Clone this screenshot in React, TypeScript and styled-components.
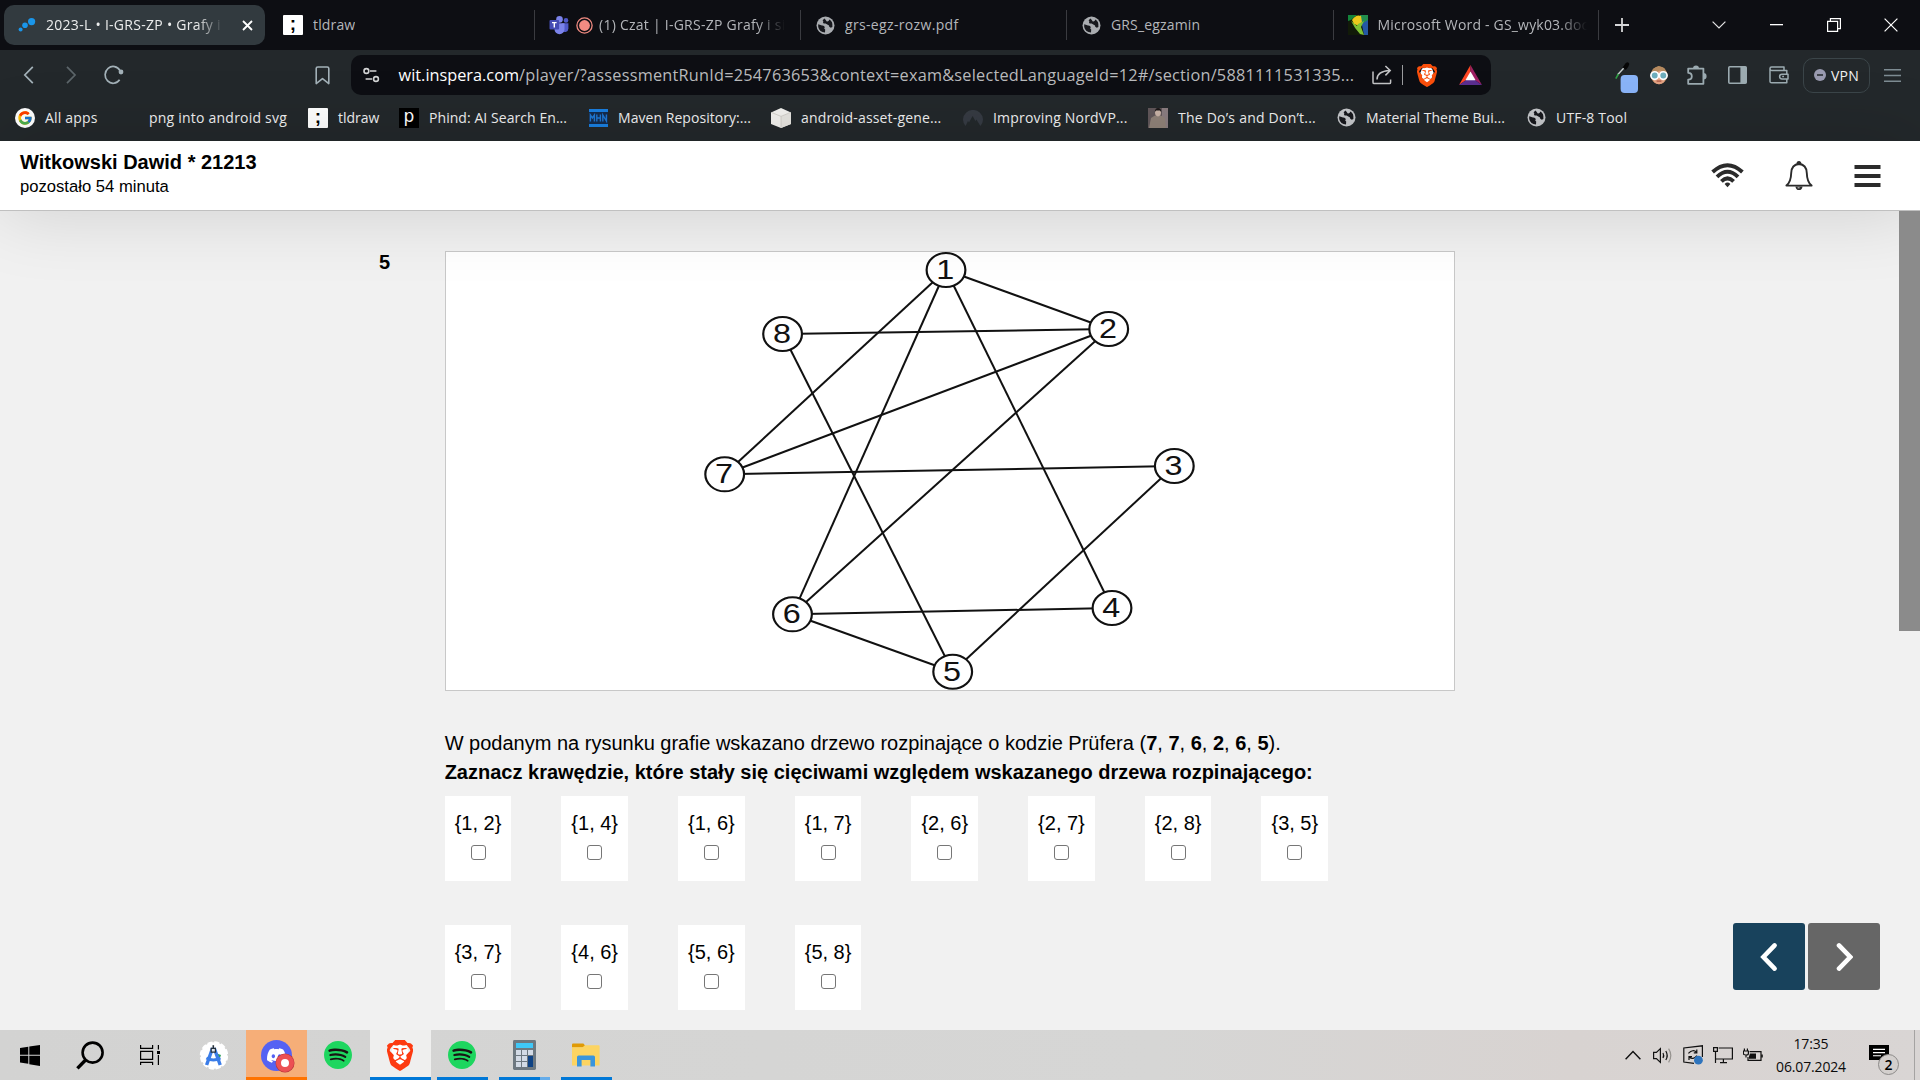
import React from 'react';
import styled, { createGlobalStyle, css } from 'styled-components';
import { FcGoogle } from 'react-icons/fc';
import { SiBrave, SiSpotify, SiDiscord } from 'react-icons/si';

const UI_FONT = `"Open Sans", "Noto Sans", sans-serif`;
const PAGE_FONT = `"Liberation Sans", Arial, sans-serif`;

const GlobalStyle = createGlobalStyle`
  *, *::before, *::after { box-sizing: border-box; }
  html, body { margin: 0; padding: 0; overflow: hidden; background: #f1f1f1; }
  svg { display: block; flex: none; }
`;

const Screen = styled.div`
  width: 1920px;
  height: 1080px;
  display: flex;
  flex-direction: column;
  overflow: hidden;
  font-family: ${PAGE_FONT};
`;

/* ---------- browser tabs ---------- */

const TabStrip = styled.div`
  height: 50px;
  flex: none;
  display: flex;
  align-items: center;
  padding-left: 4px;
  background: #0d0e13;
  font-family: ${UI_FONT};
`;

const Tab = styled.div<{ $w: number; $active?: boolean; $line?: boolean; $pad?: number }>`
  position: relative;
  width: ${(p) => p.$w}px;
  height: 40px;
  display: flex;
  align-items: center;
  padding-left: ${(p) => p.$pad ?? 14}px;
  flex: none;
  color: #b4b6ba;
  ${(p) =>
    p.$active &&
    css`
      border-radius: 10px;
      background: #323a3f;
      color: #eceded;
    `}
  ${(p) =>
    p.$line &&
    css`
      &::after {
        content: '';
        position: absolute;
        right: 0;
        top: 5px;
        width: 1px;
        height: 30px;
        background: #3a3b40;
      }
    `}
`;

const TabIcon = styled.span<{ $w?: number; $gap?: number }>`
  width: ${(p) => p.$w ?? 20}px;
  height: 20px;
  flex: none;
  display: flex;
  align-items: center;
  justify-content: center;
  margin-right: ${(p) => p.$gap ?? 10}px;
`;

const TabTitle = styled.span<{ $w?: number; $ls?: number }>`
  font-size: 14px;
  line-height: 20px;
  letter-spacing: ${(p) => p.$ls ?? 0.15}px;
  white-space: nowrap;
  overflow: hidden;
  ${(p) =>
    p.$w &&
    css`
      width: ${p.$w}px;
      mask-image: linear-gradient(to right, #000 ${p.$w - 28}px, transparent ${p.$w}px);
    `}
`;

const TabClose = styled.span`
  margin-left: 18px;
  display: flex;
`;

const WindowButtons = styled.div`
  margin-left: auto;
  display: flex;
  align-items: center;
`;

const WindowButton = styled.span`
  width: 57.5px;
  height: 30px;
  display: flex;
  align-items: center;
  justify-content: center;
`;

const NewTab = styled.span`
  width: 46px;
  display: flex;
  justify-content: center;
`;

/* ---------- browser toolbar ---------- */

const Toolbar = styled.div`
  height: 50px;
  flex: none;
  display: flex;
  align-items: center;
  background: #23282b;
  font-family: ${UI_FONT};
`;

const NavButtons = styled.div`
  width: 351px;
  height: 50px;
  display: flex;
  align-items: center;
  padding-left: 20px;
  color: #a3b1b8;
`;

const NavButton = styled.span<{ $w: number; $dim?: boolean }>`
  width: ${(p) => p.$w}px;
  display: flex;
  opacity: ${(p) => (p.$dim ? 0.45 : 1)};
`;

const AddressBar = styled.div`
  width: 1140px;
  height: 40px;
  display: flex;
  align-items: center;
  padding-left: 12px;
  border-radius: 10px;
  background: #0d0e13;
  color: #b9babc;
`;

const Url = styled.span`
  width: 973px;
  margin-left: 18.6px;
  font-size: 16.3px;
  line-height: 24px;
  letter-spacing: 0.225px;
  white-space: nowrap;
`;

const Host = styled.span`
  color: #ffffff;
  letter-spacing: 0;
`;

const Divider = styled.span`
  width: 1px;
  height: 20px;
  margin: 0 14px 0 10px;
  background: #9b9c9f;
`;

const AddressIcon = styled.span<{ $gap?: number }>`
  display: flex;
  margin-right: ${(p) => p.$gap ?? 0}px;
`;

const Extensions = styled.div`
  flex: 1;
  height: 50px;
  display: flex;
  align-items: center;
  padding-left: 123px;
  color: #9cabb1;
`;

const Extension = styled.span<{ $w: number }>`
  width: ${(p) => p.$w}px;
  display: flex;
  flex: none;
`;

const VpnButton = styled.span`
  width: 67px;
  height: 35px;
  display: flex;
  flex: none;
  align-items: center;
  justify-content: center;
  gap: 5px;
  margin-right: 14px;
  border: 1px solid #3b4549;
  border-radius: 10px;
  color: #f2f2f2;
  font-size: 14px;
  letter-spacing: 0.2px;
`;

const Bookmarks = styled.div`
  height: 41px;
  flex: none;
  display: flex;
  align-items: center;
  padding: 0 0 6px 15px;
  background: #23282b;
  color: #f0f0f1;
  font-family: ${UI_FONT};
`;

const Bookmark = styled.span<{ $w: number; $ls: number }>`
  width: ${(p) => p.$w}px;
  flex: none;
  display: flex;
  align-items: center;
  gap: 10px;
  font-size: 14px;
  line-height: 20px;
  letter-spacing: ${(p) => p.$ls}px;
  white-space: nowrap;
`;

const BookmarkIcon = styled.span`
  width: 20px;
  height: 20px;
  flex: none;
  display: flex;
  align-items: center;
  justify-content: center;
`;

const SquareIcon = styled.span<{ $dark?: boolean }>`
  width: 20px;
  height: 20px;
  display: flex;
  align-items: center;
  justify-content: center;
  border-radius: ${(p) => (p.$dark ? 0 : 1)}px;
  background: ${(p) => (p.$dark ? '#000' : '#fff')};
  color: ${(p) => (p.$dark ? '#fff' : '#000')};
  font: ${(p) => (p.$dark ? `500 17px/14px "DejaVu Sans", sans-serif` : `bold 19px/16px ${PAGE_FONT}`)};
  padding-bottom: ${(p) => (p.$dark ? 3 : 2)}px;
`;

/* ---------- exam page ---------- */

const ExamHeader = styled.header`
  position: relative;
  z-index: 1;
  height: 70px;
  flex: none;
  display: flex;
  justify-content: space-between;
  align-items: flex-start;
  padding: 9px 39px 0 20px;
  border-bottom: 1px solid #c0c0c0;
  background: #fff;
  box-shadow: 0 0 75px rgba(0, 0, 0, 0.15);
  color: #000;
`;

const Candidate = styled.div`
  font-weight: bold;
  font-size: 20px;
  line-height: 24px;
`;

const TimeLeft = styled.div`
  margin-top: 1px;
  font-size: 16.64px;
  line-height: 24px;
`;

const HeaderIcons = styled.div`
  height: 52px;
  display: flex;
  align-items: center;
`;

const HeaderIcon = styled.span<{ $gap?: number }>`
  display: flex;
  margin-right: ${(p) => p.$gap ?? 0}px;
`;

const ExamBody = styled.main`
  height: 819px;
  flex: none;
  display: flex;
  background: #f1f1f1;
`;

const QuestionNumber = styled.div`
  width: 445px;
  flex: none;
  padding: 39px 0 0 379px;
  font-weight: bold;
  font-size: 20px;
  line-height: 24px;
`;

const Question = styled.section`
  width: 1010px;
  flex: none;
  padding-top: 40px;
`;

const Figure = styled.div`
  width: 1010px;
  height: 440px;
  border: 1px solid #c8c8c8;
  background: #fff;
`;

const Prompt = styled.p`
  margin: 38px 0 0 -0.35px;
  font-size: 20px;
  line-height: 29px;
  color: #000;
  white-space: nowrap;
`;

const Answers = styled.div`
  display: grid;
  grid-template-columns: repeat(8, 66.7px);
  column-gap: 50px;
  row-gap: 44px;
  margin: 9px 0 0 -0.35px;
`;

const Answer = styled.label`
  height: 85px;
  display: flex;
  flex-direction: column;
  align-items: center;
  padding-top: 15px;
  background: #fff;
  font-size: 20px;
  line-height: 24px;
`;

const Checkbox = styled.input`
  appearance: none;
  width: 15px;
  height: 15px;
  margin: 10px 0 0;
  border: 1px solid #767676;
  border-radius: 3px;
  background: #fff;
`;

const Side = styled.aside`
  flex: 1;
  display: flex;
  align-items: flex-end;
  justify-content: flex-end;
  gap: 3px;
  padding: 0 19px 40px 0;
`;

const StepButton = styled.button<{ $next?: boolean }>`
  width: 72px;
  height: 67px;
  display: flex;
  align-items: center;
  justify-content: center;
  padding: 0;
  border: 0;
  border-radius: 3px;
  background: ${(p) => (p.$next ? '#666666' : '#18425c')};
`;

const ScrollTrack = styled.div`
  position: relative;
  z-index: 2;
  width: 21px;
  flex: none;
`;

const ScrollThumb = styled.div`
  height: 420px;
  background: #8b8b8b;
`;

/* ---------- taskbar ---------- */

const Taskbar = styled.footer`
  height: 50px;
  flex: none;
  display: flex;
  background: linear-gradient(90deg, #d3d3d2 0%, #d6d6d5 60%, #d8d3d1 82%, #d9d5d4 100%);
  font-family: ${UI_FONT};
`;

const TaskButton = styled.span<{ $w: number; $bg?: string; $bar?: string; $inset?: number; $more?: boolean }>`
  width: ${(p) => p.$w}px;
  height: 50px;
  flex: none;
  display: flex;
  align-items: center;
  justify-content: center;
  background: ${(p) => p.$bg ?? 'transparent'};
  ${(p) =>
    p.$bar &&
    css`
      position: relative;
      &::after {
        content: '';
        position: absolute;
        bottom: 0;
        left: ${p.$inset ?? 0}px;
        right: ${p.$inset ?? 0}px;
        height: 3px;
        background: ${p.$more ? `linear-gradient(90deg, ${p.$bar} 41px, #66adea 41px)` : p.$bar};
      }
    `}
`;

const Layers = styled.span<{ $size: number }>`
  width: ${(p) => p.$size}px;
  height: ${(p) => p.$size}px;
  display: grid;
  place-items: center;
  & > * {
    grid-area: 1 / 1;
  }
`;

const DarkDisc = styled.span`
  width: 25px;
  height: 25px;
  border-radius: 50%;
  background: #191414;
`;

const DiscordDisc = styled.span`
  width: 31px;
  height: 31px;
  display: flex;
  align-items: center;
  justify-content: center;
  border-radius: 50%;
  background: #5562f3;
`;

const DiscordDot = styled.span`
  width: 18px;
  height: 18px;
  place-self: end;
  margin: 0 -1px -1px 0;
  border: 5px solid #ec5053;
  border-radius: 50%;
  background: #fff;
  box-shadow: 0 0 0 0.5px #b5343a;
`;

const Tray = styled.div`
  margin-left: auto;
  display: flex;
  align-items: center;
`;

const TrayIcon = styled.span<{ $w: number }>`
  width: ${(p) => p.$w}px;
  height: 50px;
  display: flex;
  align-items: center;
`;

const Clock = styled.div`
  width: 92px;
  text-align: center;
  font-size: 14px;
  line-height: 23px;
  letter-spacing: -0.15px;
  color: #0b0b0b;
`;

const Notifications = styled.div`
  position: relative;
  width: 57px;
  height: 50px;
  padding: 15px 0 0 12px;
`;

const NotificationCount = styled.span`
  position: absolute;
  left: 21px;
  top: 24px;
  width: 21px;
  height: 21px;
  border: 1px solid #8c8a89;
  border-radius: 50%;
  background: #d3cfcd;
  text-align: center;
  font-size: 14px;
  font-weight: 600;
  line-height: 19px;
`;

const DesktopEdge = styled.span`
  width: 6px;
  height: 50px;
  border-left: 1px solid #a5a3a2;
`;

/* ---------- drawings ---------- */

const Globe = ({ color = '#a9acb0' }: { color?: string }) => (
  <svg width="19" height="19" viewBox="0 0 19 19">
    <circle cx="9.5" cy="9.5" r="9" fill={color} />
    <path d="M2.2 8.2 L6 9.6 Q8.4 9.4 8.8 11.2 Q7.4 12.6 9.2 13.6 L9 16.6 Q3.4 16.2 2.2 11z" fill="#17181d" />
    <path d="M8.6 2.4 Q5.6 4.4 7.4 5.6 Q6 7.8 9.6 7.6 L13 9.6 Q12.6 11 14.8 11.8 L16.4 11 Q17 5.6 13.4 3.6 Q12.6 5.8 10.8 5.4z" fill="#17181d" />
  </svg>
);

const BraveLion = ({ w, h, color }: { w: number; h: number; color: string }) => (
  <svg width={w} height={h} viewBox="2 0 20 24" preserveAspectRatio="none">
    <path d="M12 3 L17 4.6 L18.6 9 L16 17 L12 20.6 L8 17 L5.4 9 L7 4.6z" fill="#fff" />
    <SiBrave size={24} color={color} />
  </svg>
);

const Spotify = () => (
  <Layers $size={28}>
    <DarkDisc />
    <SiSpotify size={28} color="#1ed65f" />
  </Layers>
);

const nodes = [
  { n: 1, x: 946, y: 270 },
  { n: 2, x: 1108.7, y: 329 },
  { n: 3, x: 1174.3, y: 466 },
  { n: 4, x: 1112, y: 608 },
  { n: 5, x: 952.7, y: 671.7 },
  { n: 6, x: 792.5, y: 614.3 },
  { n: 7, x: 724.7, y: 474.3 },
  { n: 8, x: 782.6, y: 334 },
];
const edges = [
  [1, 2], [1, 4], [1, 6], [1, 7], [2, 6], [2, 7], [2, 8], [3, 5], [3, 7], [4, 6], [5, 6], [5, 8],
];

const Graph = () => (
  <svg width="1008" height="438" viewBox="446 252 1008 438">
    {edges.map(([a, b]) => (
      <line
        key={`${a}-${b}`}
        x1={nodes[a - 1].x}
        y1={nodes[a - 1].y}
        x2={nodes[b - 1].x}
        y2={nodes[b - 1].y}
        stroke="#111"
        strokeWidth="2"
      />
    ))}
    {nodes.map(({ n, x, y }) => (
      <g key={n} transform={`translate(${x} ${y}) scale(1.14 1)`}>
        <circle r="17" fill="#fff" stroke="#111" strokeWidth="1.9" />
        <text x="-0.6" y="9" textAnchor="middle" fontFamily={PAGE_FONT} fontSize="28.4" fill="#111">
          {n}
        </text>
      </g>
    ))}
  </svg>
);

const answers = ['{1, 2}', '{1, 4}', '{1, 6}', '{1, 7}', '{2, 6}', '{2, 7}', '{2, 8}', '{3, 5}', '{3, 7}', '{4, 6}', '{5, 6}', '{5, 8}'];
const code = [7, 7, 6, 2, 6, 5];

export default function App() {
  return (
    <Screen>
      <GlobalStyle />
      <TabStrip>
        <Tab $w={261} $active>
          <TabIcon $w={18}>
            <svg width="18" height="18" viewBox="0 0 18 18" fill="#1a96ea">
              <circle cx="2.6" cy="13.4" r="2" />
              <circle cx="7" cy="9.2" r="2.8" />
              <circle cx="13.6" cy="5.6" r="3.6" />
            </svg>
          </TabIcon>
          <TabTitle $w={178} $ls={0.28}>2023-L • I-GRS-ZP • Grafy i s</TabTitle>
          <TabClose>
            <svg width="11" height="11" viewBox="0 0 11 11" stroke="#fff" strokeWidth="1.8">
              <path d="M1 1 L10 10 M10 1 L1 10" />
            </svg>
          </TabClose>
        </Tab>
        <Tab $w={270} $line $pad={18}>
          <TabIcon><SquareIcon>;</SquareIcon></TabIcon>
          <TabTitle>tldraw</TabTitle>
        </Tab>
        <Tab $w={266} $line>
          <TabIcon $gap={7}>
            <svg width="20" height="20" viewBox="0 0 20 20">
              <circle cx="10.5" cy="4.4" r="3.3" fill="#7b83eb" />
              <circle cx="17" cy="5.4" r="2.3" fill="#5059c9" />
              <path d="M13 8.2h6.4v5.4a3.4 3.4 0 0 1-6.4 1.6z" fill="#5059c9" />
              <path d="M5.5 8.2h10v6a5 5 0 0 1-10 0z" fill="#7b83eb" />
              <rect x="0.5" y="5" width="9.6" height="9.6" rx="1" fill="#454cb4" />
              <path d="M3 7.6h4.6M5.3 7.6v5" stroke="#fff" strokeWidth="1.4" />
            </svg>
          </TabIcon>
          <TabIcon $w={17} $gap={6}>
            <svg width="17" height="17" viewBox="0 0 17 17">
              <circle cx="8.5" cy="8.5" r="7.6" fill="none" stroke="#f28b82" strokeWidth="1.3" />
              <circle cx="8.5" cy="8.5" r="5.4" fill="#f28b82" />
            </svg>
          </TabIcon>
          <TabTitle $w={186} $ls={0.25}>(1) Czat | I-GRS-ZP Grafy i sie</TabTitle>
        </Tab>
        <Tab $w={266} $line $pad={15}>
          <TabIcon $w={19} $gap={10}><Globe /></TabIcon>
          <TabTitle $ls={0.34}>grs-egz-rozw.pdf</TabTitle>
        </Tab>
        <Tab $w={267} $line $pad={15}>
          <TabIcon $w={19}><Globe /></TabIcon>
          <TabTitle>GRS_egzamin</TabTitle>
        </Tab>
        <Tab $w={265} $line>
          <TabIcon $gap={9.5}>
            <svg width="20" height="20" viewBox="0 0 20 20">
              <rect width="20" height="20" fill="#111a08" />
              <path d="M0 0h9l-6 5-3 1z" fill="#13843a" />
              <path d="M12 0h8v20h-4z" fill="#2458a4" />
              <path d="M12 0h8v5l-5 3z" fill="#238f4d" />
              <path d="M4 5 Q8 -1 13 1 L14 7 L11 11 L6 9z" fill="#ecc91c" />
              <path d="M3 6 L9 11 L10 9 L16 6 L13 12 L16 20 L12 19 Q7 14 3 6z" fill="#7fc234" />
            </svg>
          </TabIcon>
          <TabTitle $w={209} $ls={0.19}>Microsoft Word - GS_wyk03.doc</TabTitle>
        </Tab>
        <NewTab>
          <svg width="14" height="14" viewBox="0 0 14 14" stroke="#d5d6d8" strokeWidth="1.8">
            <path d="M7 0V14M0 7H14" />
          </svg>
        </NewTab>
        <WindowButtons>
          <WindowButton>
            <svg width="14" height="8" viewBox="0 0 14 8" fill="none" stroke="#e4e4e5" strokeWidth="1.2"><path d="M0.6 0.6 L7 7 L13.4 0.6" /></svg>
          </WindowButton>
          <WindowButton>
            <svg width="13" height="2" viewBox="0 0 13 2"><rect width="13" height="1.3" fill="#fff" /></svg>
          </WindowButton>
          <WindowButton>
            <svg width="14" height="14" viewBox="0 0 14 14" fill="none" stroke="#fff" strokeWidth="1.2"><path d="M0.6 3.4h10v10h-10zM3.4 3.4V0.6h10v10h-2.8" /></svg>
          </WindowButton>
          <WindowButton>
            <svg width="14" height="14" viewBox="0 0 14 14" stroke="#fff" strokeWidth="1.2"><path d="M0.6 0.6 L13.4 13.4 M13.4 0.6 L0.6 13.4" /></svg>
          </WindowButton>
        </WindowButtons>
      </TabStrip>

      <Toolbar>
        <NavButtons>
          <NavButton $w={42}>
            <svg width="18" height="18" viewBox="0 0 18 18" fill="none" stroke="currentColor" strokeWidth="1.7"><path d="M12.8 0.8 L4.8 9 L12.8 17.2" /></svg>
          </NavButton>
          <NavButton $w={41} $dim>
            <svg width="18" height="18" viewBox="0 0 18 18" fill="none" stroke="currentColor" strokeWidth="1.7"><path d="M5 0.8 L13 9 L5 17.2" /></svg>
          </NavButton>
          <NavButton $w={212}>
            <svg width="21" height="20" viewBox="0 0 21 20" fill="none" stroke="currentColor" strokeWidth="1.7">
              <path d="M16.6 14.8 A8 8.4 0 1 1 17 5.6" />
              <circle cx="18" cy="7" r="2.4" fill="currentColor" stroke="none" />
            </svg>
          </NavButton>
          <NavButton $w={15}>
            <svg width="15" height="19" viewBox="0 0 15 19" fill="none" stroke="currentColor" strokeWidth="1.6" strokeLinejoin="round"><path d="M1.2 2.6 Q1.2 1 2.8 1 H12.2 Q13.8 1 13.8 2.6 V17.6 L7.5 12.6 L1.2 17.6z" /></svg>
          </NavButton>
        </NavButtons>
        <AddressBar>
          <svg width="17" height="16" viewBox="0 0 17 16" fill="none" stroke="#d3d4d5" strokeWidth="1.6">
            <circle cx="3.4" cy="4" r="2.4" />
            <path d="M7 4h6.4M2.6 12h6.6" />
            <circle cx="13" cy="12" r="2.4" />
          </svg>
          <Url>
            <Host>wit.inspera.com</Host>/player/?assessmentRunId=254763653&amp;context=exam&amp;selectedLanguageId=12#/section/5881111531335...
          </Url>
          <AddressIcon>
            <svg width="20" height="20" viewBox="0 0 20 20" fill="none" stroke="#c3c4c6" strokeWidth="1.5">
              <path d="M1 6.6 V17.4 Q1 18.6 2.2 18.6 H17.4 Q18.6 18.6 18.6 17.4 V14.6" />
              <path d="M5 14.4 Q5 6.4 17.6 5.6 M13.4 1 L18.2 5.6 L13.4 10.4" />
            </svg>
          </AddressIcon>
          <Divider />
          <AddressIcon $gap={22}><BraveLion w={20} h={23} color="#fb4f0b" /></AddressIcon>
          <AddressIcon>
            <svg width="23" height="20" viewBox="0 0 23 20">
              <path d="M11.5 0 L0 20 L11.5 12z" fill="#ff4724" />
              <path d="M11.5 0 L23 20 L11.5 12z" fill="#9e1f63" />
              <path d="M0 20 H23 L11.5 12z" fill="#5b2e90" />
              <path d="M11.5 6.6 L16.6 15.2 H6.4z" fill="#fff" />
            </svg>
          </AddressIcon>
        </AddressBar>
        <Extensions>
          <Extension $w={35}>
            <svg width="25" height="36" viewBox="0 0 25 36">
              <path d="M8.6 10.6 L11.4 6.4 Q14.4 4 15.2 6.8 Q15.4 8.6 11.8 13z" fill="#050505" />
              <path d="M9.6 11.2 L3.4 18" stroke="#c9d0d0" strokeWidth="1.4" />
              <path d="M4.4 17 L1.8 21.6" stroke="#2f9e44" strokeWidth="1.6" />
              <rect x="6.6" y="18" width="17.4" height="18" rx="4" fill="#8ab4f8" />
            </svg>
          </Extension>
          <Extension $w={38}>
            <svg width="20" height="20" viewBox="0 0 21 20">
              <ellipse cx="10.5" cy="10.2" rx="8.6" ry="9.4" fill="#b58a5f" />
              <ellipse cx="10.5" cy="12.4" rx="7" ry="7.2" fill="#e2a182" />
              <path d="M3.4 9.4 Q9 8 13.4 3.4 Q15.6 7 17.6 9.4 L16 2.6 L10 0.6 L4 4z" fill="#b58a5f" />
              <circle cx="6" cy="10.6" r="4" fill="#6eaebd" stroke="#fff" strokeWidth="1.8" />
              <circle cx="15" cy="10.6" r="4" fill="#6eaebd" stroke="#fff" strokeWidth="1.8" />
              <path d="M8 16.4h5" stroke="#a54c3a" strokeWidth="1.2" />
            </svg>
          </Extension>
          <Extension $w={41}>
            <svg width="21" height="22" viewBox="0 0 21 22" fill="none" stroke="currentColor" strokeWidth="1.8">
              <path d="M1.2 4.6 H16.4 V19.8 H1.2 V15.6 Q4.8 15.6 4.8 12.2 Q4.8 8.8 1.2 8.8z" strokeLinejoin="round" />
              <path d="M6 4.6 a3 3.2 0 0 1 6 0zM16.4 9 a3.2 3.2 0 0 1 0 6.4z" fill="currentColor" stroke="none" />
            </svg>
          </Extension>
          <Extension $w={41}>
            <svg width="19" height="18" viewBox="0 0 19 18">
              <rect x="0.8" y="0.8" width="17.4" height="16.4" rx="1" fill="none" stroke="currentColor" strokeWidth="1.6" />
              <rect x="12.4" y="0.8" width="6" height="16.4" fill="currentColor" />
            </svg>
          </Extension>
          <Extension $w={34}>
            <svg width="20" height="18" viewBox="0 0 20 18" fill="none" stroke="currentColor" strokeWidth="1.5" strokeLinejoin="round">
              <path d="M1 2.4 Q1 0.9 2.6 0.9 H15 V4.4 H17.8 V16.8 H2.6 Q1 16.8 1 15.4z M1 2.8 Q1 4.4 2.6 4.4 H15" />
              <path d="M19 8.2 H13 Q10.6 8.2 10.6 10.6 Q10.6 13 13 13 H19z" fill="#23282b" />
              <path d="M13.2 10.6h1.8" />
            </svg>
          </Extension>
          <VpnButton>
            <svg width="12" height="12" viewBox="0 0 12 12"><circle cx="6" cy="6" r="6" fill="#9a9bb0" /><path d="M3 6h6" stroke="#23282b" strokeWidth="1.5" /></svg>
            VPN
          </VpnButton>
          <svg width="17" height="13" viewBox="0 0 17 13" stroke="#7e8c93" strokeWidth="1.4"><path d="M0 0.8H17M0 6.5H17M0 12.2H17" /></svg>
        </Extensions>
      </Toolbar>

      <Bookmarks>
        <Bookmark $w={104} $ls={0.17}>
          <BookmarkIcon>
            <Layers $size={20}>
              <svg width="20" height="20"><circle cx="10" cy="10" r="10" fill="#fff" /></svg>
              <FcGoogle size={16} />
            </Layers>
          </BookmarkIcon>
          All apps
        </Bookmark>
        <Bookmark $w={189} $ls={0.22}><BookmarkIcon />png into android svg</Bookmark>
        <Bookmark $w={91} $ls={0}><BookmarkIcon><SquareIcon>;</SquareIcon></BookmarkIcon>tldraw</Bookmark>
        <Bookmark $w={189} $ls={0.06}><BookmarkIcon><SquareIcon $dark>p</SquareIcon></BookmarkIcon>Phind: AI Search En...</Bookmark>
        <Bookmark $w={183} $ls={0.05}>
          <BookmarkIcon>
            <svg width="19" height="18" viewBox="0 0 19 18">
              <rect width="19" height="18" fill="#142c4e" />
              <rect width="19" height="3" fill="#1a7fe0" />
              <rect y="15" width="19" height="3" fill="#1a7fe0" />
              <path d="M1.4 12.4V6L3.4 9 5.4 6V12.4M7.8 5.6V12.6M11.4 5.6V12.6M7.8 9H11.4M13.8 12.4V6l3.6 6V5.6" fill="none" stroke="#1f78d4" strokeWidth="1.4" />
            </svg>
          </BookmarkIcon>
          Maven Repository:...
        </Bookmark>
        <Bookmark $w={192} $ls={0.16}>
          <BookmarkIcon>
            <svg width="20" height="20" viewBox="0 0 20 20">
              <path d="M10 0 L20 4.4 V16 L10 20 L0 16 V4.4z" fill="#f3f2ef" />
              <path d="M10 8.4 L20 4.4 V16 L10 20z" fill="#e7e5e0" />
              <path d="M0.4 4.4 L10 8.4 L19.6 4.4 M10 8.4V19.6" fill="none" stroke="#cbc9c3" strokeWidth="0.8" />
            </svg>
          </BookmarkIcon>
          android-asset-gene...
        </Bookmark>
        <Bookmark $w={185} $ls={0.19}>
          <BookmarkIcon>
            <svg width="20" height="16" viewBox="0 0 20 16">
              <path d="M2.6 16 A10 9.6 0 1 1 17.4 16 L13.4 9.4 L12.4 11 L9.6 6 L6 12.4 L5 11z" fill="#363b43" />
            </svg>
          </BookmarkIcon>
          Improving NordVP...
        </Bookmark>
        <Bookmark $w={188} $ls={0.23}>
          <BookmarkIcon>
            <svg width="20" height="20" viewBox="0 0 20 20">
              <rect width="20" height="20" fill="#61575a" />
              <rect x="14" width="6" height="20" fill="#8a7d80" />
              <path d="M1 20 L3 10 L7 7.4 H13 L17 10 L18 20z" fill="#8f8278" />
              <ellipse cx="10" cy="4.6" rx="3" ry="3.8" fill="#c9b3a7" />
              <path d="M6.8 4 Q7 0 10 0 Q13.4 0 13.2 4 L12 2.4 H8z" fill="#1b1718" />
            </svg>
          </BookmarkIcon>
          The Do’s and Don’t...
        </Bookmark>
        <Bookmark $w={190} $ls={0.03}><BookmarkIcon><Globe color="#c4c6c9" /></BookmarkIcon>Material Theme Bui...</Bookmark>
        <Bookmark $w={110} $ls={0.18}><BookmarkIcon><Globe color="#c4c6c9" /></BookmarkIcon>UTF-8 Tool</Bookmark>
      </Bookmarks>

      <ExamHeader>
        <div>
          <Candidate>Witkowski Dawid * 21213</Candidate>
          <TimeLeft>pozostało 54 minuta</TimeLeft>
        </div>
        <HeaderIcons>
          <HeaderIcon $gap={41}>
            <svg width="33" height="26" viewBox="0 0 33 26" fill="none" stroke="#2b2b2b" strokeWidth="3.9">
              <path d="M1.6 9 Q16.5 -4.6 31.4 9" />
              <path d="M6 13.8 Q16.5 3.8 27 13.8" />
              <path d="M10.4 18.4 Q16.5 12.4 22.6 18.4" />
              <path d="M13.6 21 Q16.5 18.2 19.4 21 L16.5 24.2z" fill="#2b2b2b" stroke="none" />
            </svg>
          </HeaderIcon>
          <HeaderIcon $gap={41}>
            <svg width="28" height="30" viewBox="0 0 28 30" fill="none" stroke="#2b2b2b" strokeWidth="1.9">
              <path d="M1.4 24.6 Q6 21 6.2 12 Q6.6 3.4 14 3 Q21.4 3.4 21.8 12 Q22 21 26.6 24.6z" strokeLinejoin="round" />
              <path d="M12.4 3 a1.6 2 0 0 1 3.2 0z" fill="#2b2b2b" />
              <path d="M10.4 25.4 Q11 29 14 29 Q17 29 17.6 25.4z" fill="#2b2b2b" stroke="none" />
              <path d="M12.6 26.8 h2" stroke="#fff" strokeWidth="0.8" />
            </svg>
          </HeaderIcon>
          <HeaderIcon>
            <svg width="27" height="22" viewBox="0 0 27 22" fill="#2b2b2b"><path d="M0.5 0h26v4h-26zM0.5 9h26v4h-26zM0.5 18h26v4h-26z" /></svg>
          </HeaderIcon>
        </HeaderIcons>
      </ExamHeader>

      <ExamBody>
        <QuestionNumber>5</QuestionNumber>
        <Question>
          <Figure><Graph /></Figure>
          <Prompt>
            W podanym na rysunku grafie wskazano drzewo rozpinające o kodzie Prüfera (
            {code.map((c, i) => (
              <React.Fragment key={i}>
                {i > 0 && ', '}
                <b>{c}</b>
              </React.Fragment>
            ))}
            ).
            <br />
            <b>Zaznacz krawędzie, które stały się cięciwami względem wskazanego drzewa rozpinającego:</b>
          </Prompt>
          <Answers>
            {answers.map((a) => (
              <Answer key={a}>
                {a}
                <Checkbox type="checkbox" />
              </Answer>
            ))}
          </Answers>
        </Question>
        <Side>
          <StepButton>
            <svg width="18" height="30" viewBox="0 0 18 30" fill="none" stroke="#fff" strokeWidth="4.6" strokeLinecap="round"><path d="M14.6 3.4 L3.4 15 L14.6 26.6" /></svg>
          </StepButton>
          <StepButton $next>
            <svg width="18" height="30" viewBox="0 0 18 30" fill="none" stroke="#fff" strokeWidth="4.6" strokeLinecap="round"><path d="M4 3.4 L15.2 15 L4 26.6" /></svg>
          </StepButton>
        </Side>
        <ScrollTrack><ScrollThumb /></ScrollTrack>
      </ExamBody>

      <Taskbar>
        <TaskButton $w={60}>
          <svg width="20" height="21" viewBox="0 0 20 21" fill="#000"><path d="M0 3 L8.3 1.8 V9.8 H0zM9.3 1.6 L20 0 V9.8 H9.3zM0 10.8 H8.3 V18.8 L0 17.6zM9.3 10.8 H20 V21 L9.3 19.2z" /></svg>
        </TaskButton>
        <TaskButton $w={60}>
          <svg width="28" height="29" viewBox="0 0 28 29" fill="none" stroke="#000"><circle cx="16.6" cy="11.6" r="10" strokeWidth="2.6" /><path d="M9.6 19 L1.4 27.4" strokeWidth="3.4" /></svg>
        </TaskButton>
        <TaskButton $w={60}>
          <svg width="20" height="20" viewBox="0 0 20 20" fill="none" stroke="#000" strokeWidth="1.2"><path d="M0.6 0v3.4h12V0M0.6 6.4h12v8h-12zM0.6 20v-2.6h12V20M18.4 0v4.4M18.4 10v10" /><path d="M17 6h3v3h-3z" fill="#000" stroke="none" /></svg>
        </TaskButton>
        <TaskButton $w={66}>
          <svg width="29" height="29" viewBox="0 0 29 29">
            <circle cx="15" cy="14.5" r="13.2" fill="#fff" stroke="#fff" strokeWidth="2" strokeDasharray="5 1.9" />
            <path d="M18 12.4 L22 14 L20.6 18 L17.6 17z" fill="#2e9e57" />
            <path d="M13.6 7 L7.6 24 M15.2 7 L21.2 24" stroke="#3b7de8" strokeWidth="3.4" fill="none" />
            <path d="M7.4 17 Q14.4 21 21.4 17" stroke="#3b7de8" strokeWidth="2.8" fill="none" />
            <path d="M12.2 7.4h4.2v3.8h-4.2z" fill="#dfe5ec" stroke="#25313d" strokeWidth="1.2" />
            <path d="M14.3 4.2V8" stroke="#25313d" strokeWidth="1.6" />
          </svg>
        </TaskButton>
        <TaskButton $w={61} $bg="#f6ae78" $bar="#ff7300">
          <Layers $size={32}>
            <DiscordDisc><SiDiscord size={19} color="#fff" /></DiscordDisc>
            <DiscordDot />
          </Layers>
        </TaskButton>
        <TaskButton $w={61}><Spotify /></TaskButton>
        <TaskButton $w={63} $bg="linear-gradient(90deg, transparent 2px, #efefee 2px)" $bar="linear-gradient(90deg, transparent 2px, #0078d7 2px)">
          <BraveLion w={26} h={31} color="#fd3a10" />
        </TaskButton>
        <TaskButton $w={62} $bar="#0078d7" $inset={5.5}><Spotify /></TaskButton>
        <TaskButton $w={62} $bar="#0078d7" $inset={5.5} $more>
          <svg width="23" height="30" viewBox="0 0 23 30">
            <rect width="23" height="30" rx="1.4" fill="#6d7880" />
            <rect x="3" y="3" width="17" height="5" fill="#3fc8f8" />
            <g fill="#d3dbe6">
              <path d="M3 10h5v5H3zM9 10h5v5H9zM15 10h5v5h-5zM3 16h5v5H3zM9 16h5v5H9zM3 22h5v5H3zM9 22h5v5H9z" />
            </g>
            <rect x="15" y="16" width="5" height="11" fill="#0f4385" />
          </svg>
        </TaskButton>
        <TaskButton $w={62} $bar="#0078d7" $inset={5.5}>
          <svg width="28" height="24" viewBox="0 0 28 24">
            <path d="M0 1.4 Q0 0.4 1 0.4 H11.4 L13 2.4 V4.4 H0z" fill="#e09a05" />
            <path d="M0 4.2 H10.6 L13 2.2 H26.8 Q27.6 2.2 27.6 3 V22.4 H0z" fill="#fcd462" />
            <path d="M5 23.6 V14 Q5 12.4 6.6 12.4 H21.4 Q23 12.4 23 14 V23.6 H18.4 V17 H9.6 V23.6z" fill="#3a95dc" />
          </svg>
        </TaskButton>
        <Tray>
          <TrayIcon $w={28}>
            <svg width="16" height="10" viewBox="0 0 16 10" fill="none" stroke="#111" strokeWidth="1.4"><path d="M0.6 9.2 L8 1.4 L15.4 9.2" /></svg>
          </TrayIcon>
          <TrayIcon $w={30}>
            <svg width="20" height="17" viewBox="0 0 20 17" fill="none" stroke="#111" strokeWidth="1.2"><path d="M0.6 5.4H3.4L7.4 1.6V15.4L3.4 11.6H0.6z" /><path d="M10 6 Q11.4 8.5 10 11M12.8 4 Q15.6 8.5 12.8 13" /><path d="M15.6 1.6 Q20 8.5 15.6 15.4" stroke="#96938f" /></svg>
          </TrayIcon>
          <TrayIcon $w={30}>
            <svg width="21" height="20" viewBox="0 0 21 20" fill="none" stroke="#111" strokeWidth="1.2">
              <path d="M19.4 12V0.8L0.8 3V17L11 18.4" />
              <path d="M5.4 8.4 Q10 3.6 13.6 7.4M13.8 4.6V7.8H10.8M14 10.6 Q10 15.4 6.4 12M6 15V11.6H9" />
              <circle cx="15.4" cy="15.2" r="4.4" fill="#2e74bd" stroke="none" />
            </svg>
          </TrayIcon>
          <TrayIcon $w={30}>
            <svg width="20" height="18" viewBox="0 0 20 18" fill="none" stroke="#111" strokeWidth="1.2"><path d="M5.6 2H19.4V13H3M10.4 13V16.6M7 16.6H14M0.6 1.6H4.4V5.4H0.6zM2.5 5.4V17" /></svg>
          </TrayIcon>
          <TrayIcon $w={22}>
            <svg width="20" height="14" viewBox="0 0 20 14" fill="none" stroke="#111" strokeWidth="1.2"><path d="M6.6 3.6H18V12.4H5V9" /><path d="M18.2 6.4h1.6v3.2h-1.6zM7 5.4h6v5.4H6V8.6z" fill="#111" stroke="none" /><path d="M1.4 0.4V3M4.4 0.4V3M0.4 3H5.4V5.4Q5.4 7 3 7Q0.4 7 0.4 5.4zM3 7V9.6" /></svg>
          </TrayIcon>
          <Clock>
            17:35
            <br />
            06.07.2024
          </Clock>
          <Notifications>
            <svg width="20" height="20" viewBox="0 0 20 20"><path d="M0 0H20V15H13L10 19V15H0z" fill="#000" /><path d="M4 4.4H16M4 7.6H16M4 10.8H12" stroke="#fff" strokeWidth="1.1" /></svg>
            <NotificationCount>2</NotificationCount>
          </Notifications>
          <DesktopEdge />
        </Tray>
      </Taskbar>
    </Screen>
  );
}
